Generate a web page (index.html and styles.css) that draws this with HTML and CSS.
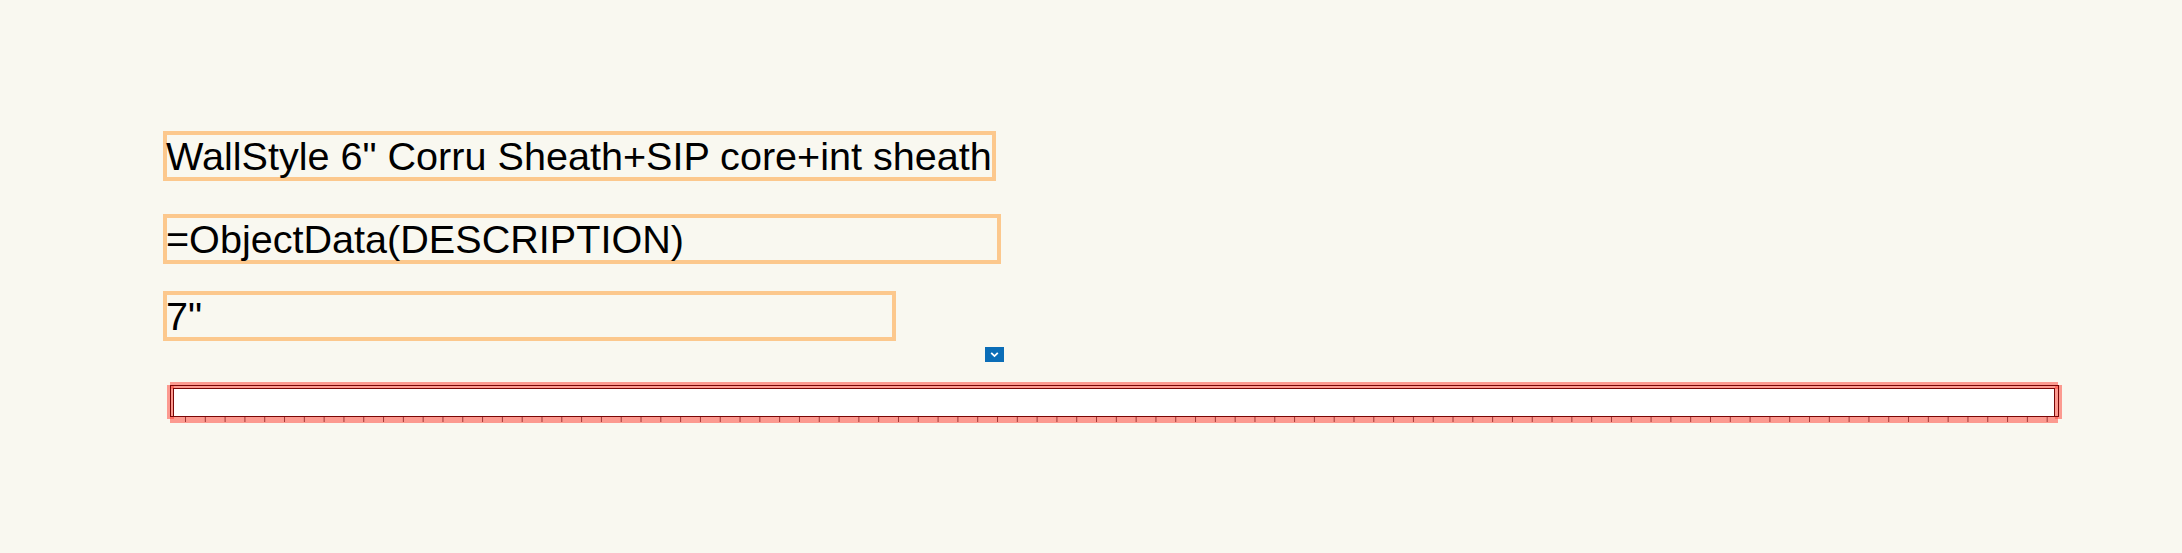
FILE: index.html
```html
<!DOCTYPE html>
<html>
<head>
<meta charset="utf-8">
<link rel="stylesheet" href="styles.css">
</head>
<body>
<div class="canvas">
  <div class="field field-name">WallStyle 6" Corru Sheath+SIP core+int sheath</div>
  <div class="field field-desc">=ObjectData(DESCRIPTION)</div>
  <div class="field field-thick">7"</div>
  <div class="dropdown-btn">
    <svg width="19" height="15" viewBox="0 0 19 15">
      <rect x="0" y="0" width="19" height="15" fill="#0b6db7"/>
      <path d="M6.2 5.8 L9.5 9.1 L12.8 5.8" fill="none" stroke="#ffffff" stroke-width="1.8"/>
    </svg>
  </div>
  <div class="wall-bar">
    <svg width="1895" height="41" viewBox="0 0 1895 41">
      <defs>
        <pattern id="ticks" patternUnits="userSpaceOnUse" x="18" y="0" width="19.805" height="41">
          <rect x="0" y="0" width="1" height="41" fill="#8a1d1d"/>
        </pattern>
      </defs>
      <rect x="7" y="7" width="1881" height="27" fill="#ffffff"/>
      <g fill="#ff3b2f" fill-opacity="0.5">
        <rect x="3" y="0" width="1888" height="7"/>
        <rect x="3" y="34" width="1888" height="7"/>
        <rect x="0" y="3" width="7" height="34"/>
        <rect x="1888" y="3" width="7" height="34"/>
      </g>
      <rect x="18" y="35" width="1863" height="5" fill="url(#ticks)" fill-opacity="0.8"/>
      <rect x="3.5" y="3.5" width="1888" height="31" fill="none" stroke="#7a0606" stroke-width="1"/>
      <rect x="6.5" y="6.5" width="1881" height="28" fill="none" stroke="#7a0606" stroke-width="1"/>
    </svg>
  </div>
</div>
</body>
</html>
```

FILE: styles.css
```css
html, body {
  margin: 0;
  padding: 0;
  background: #f9f8f0;
}

body {
  width: 2182px;
  height: 553px;
  overflow: hidden;
  font-family: "Liberation Sans", Arial, sans-serif;
}

.canvas {
  display: flex;
  flex-direction: column;
  align-items: flex-start;
  padding: 131px 0 0 163px;
}

.field {
  box-sizing: border-box;
  height: 50px;
  border: 4px solid #fcc88d;
  font-size: 39.6px;
  line-height: 43px;
  color: #000000;
  white-space: nowrap;
  overflow: visible;
  padding: 0;
  text-indent: -1px;
}

.field-name {
  width: 833px;
}

.field-desc {
  width: 838px;
  margin-top: 33px;
}

.field-thick {
  width: 733px;
  margin-top: 27px;
}

.dropdown-btn {
  margin-top: 6px;
  margin-left: 822px;
  width: 19px;
  height: 15px;
  line-height: 0;
}

.wall-bar {
  margin-top: 20px;
  margin-left: 4px;
  width: 1895px;
  height: 41px;
  line-height: 0;
}
```
